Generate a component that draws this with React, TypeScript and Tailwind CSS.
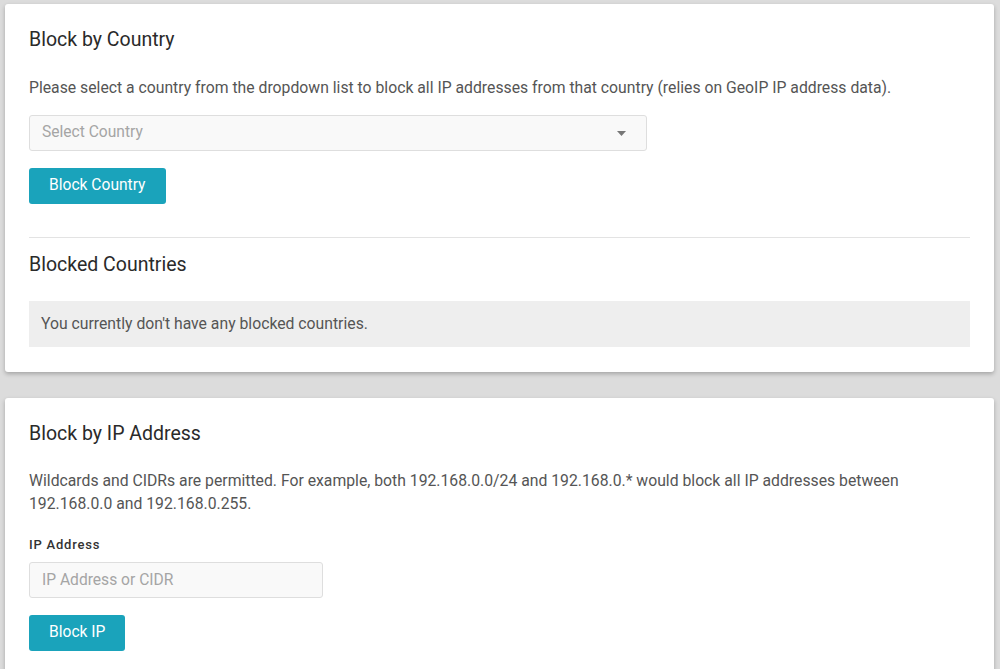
import { useState } from "react";

const btn =
  "h-9 rounded-[3px] bg-[#1aa3bb] px-5 text-[15.6px] text-white hover:bg-[#1791a7]";
const field =
  "h-9 rounded-[3px] border border-[#dedede] bg-[#f9f9f9] px-3 text-[15.6px] text-[#555] outline-none placeholder:text-[#a5a5a5]";

export default function App() {
  const [ip, setIp] = useState("");

  return (
    <div
      className="min-h-screen bg-[#dcdcdc] px-[5px] pt-1"
      style={{ fontFamily: "Roboto, 'Liberation Sans', sans-serif" }}
    >
      {/* Block by country */}
      <section className="mr-[1px] rounded-[3px] bg-white px-6 pb-[25px] pt-[25px] shadow-[0_2px_4px_rgba(0,0,0,0.25)]">
        <h2 className="text-[19.5px] leading-[22px] text-[#2a2a2a]">Block by Country</h2>
        <p className="mt-[25px] text-[15.75px] leading-[23px] text-[#555]">
          Please select a country from the dropdown list to block all IP addresses from that country
          (relies on GeoIP IP address data).
        </p>
        <div className={`${field} mt-4 flex w-[618px] items-center justify-between pr-[20px]`}>
          <span className="text-[#a5a5a5]">Select Country</span>
          <svg width="9" height="5" viewBox="0 0 9 5" className="fill-[#777]">
            <path d="M0 0h9L4.5 5z" />
          </svg>
        </div>
        <button className={`${btn} mt-[17px]`}>Block Country</button>

        <hr className="mt-[33px] border-[#e3e3e3]" />

        <h2 className="mt-[16px] text-[19.5px] leading-[22px] text-[#2a2a2a]">Blocked Countries</h2>
        <div className="mt-[25px] bg-[#eeeeee] px-3 py-[12px] text-[15.75px] leading-[22px] text-[#555]">
          You currently don't have any blocked countries.
        </div>
      </section>

      {/* Block by IP */}
      <section className="mr-[1px] mt-[26px] rounded-[3px] bg-white px-6 pb-6 pt-[25px] shadow-[0_2px_4px_rgba(0,0,0,0.25)]">
        <h2 className="text-[19.5px] leading-[22px] text-[#2a2a2a]">Block by IP Address</h2>
        <p className="mt-6 pr-16 text-[15.75px] leading-[23px] text-[#555]">
          Wildcards and CIDRs are permitted. For example, both 192.168.0.0/24 and 192.168.0.* would
          block all IP addresses between 192.168.0.0 and 192.168.0.255.
        </p>
        <label className="mt-[21px] block text-[13px] font-medium leading-[18px] tracking-[0.06em] text-[#333]">
          IP Address
        </label>
        <input
          value={ip}
          onChange={(e) => setIp(e.target.value)}
          placeholder="IP Address or CIDR"
          className={`${field} mt-2 block w-[294px]`}
        />
        <button className={`${btn} mt-[17px]`}>Block IP</button>
      </section>
    </div>
  );
}
